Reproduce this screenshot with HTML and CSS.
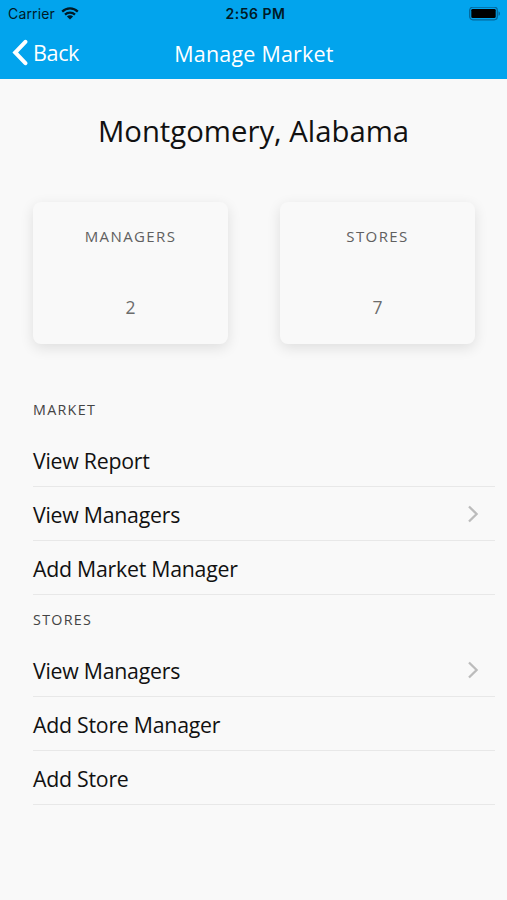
FILE: index.html
```html
<!DOCTYPE html>
<html lang="en">

<head>
    <meta charset="utf-8">
    <meta name="viewport" content="width=device-width, initial-scale=1">
    <title>Manage Market</title>
    <link rel="stylesheet" href="styles.css">
</head>

<body>
    <header class="header">
        <div class="status-bar">
            <div class="carrier">
                <span>Carrier</span>
                <svg class="wifi" width="18" height="13" viewBox="0 0 18 13">
                    <path d="M1.2 4.6a11 11 0 0 1 15.6 0M4 7.6a7.1 7.1 0 0 1 10 0" fill="none" stroke="#001a26" stroke-width="2.2" />
                    <path d="M9 12.6L5.9 9.5a4.4 4.4 0 0 1 6.2 0z" fill="#001a26" />
                </svg>
            </div>
            <div class="time">2:56 PM</div>
            <div class="battery">
                <svg width="32" height="14" viewBox="0 0 32 14">
                    <rect x="0.7" y="0.2" width="27.6" height="12.6" rx="3.2" fill="none" stroke="#04679a" stroke-width="1.3" />
                    <rect x="2.3" y="1.9" width="24.4" height="9.2" rx="1.4" fill="#000" />
                    <path d="M29.5 4.2c2 .8 2 3.8 0 4.6z" fill="#04679a" />
                </svg>
            </div>
        </div>
        <nav class="nav-bar">
            <a class="back">
                <svg width="17" height="27" viewBox="0 0 17 27">
                    <path d="M14.4 2.8L4.2 13.5l10.2 10.7" fill="none" stroke="#fff" stroke-width="4" stroke-linecap="round" stroke-linejoin="miter" />
                </svg>
                <span>Back</span>
            </a>
            <div class="nav-title">Manage Market</div>
        </nav>
    </header>

    <main>
        <h1 class="market-name">Montgomery, Alabama</h1>

        <div class="cards">
            <div class="card">
                <div class="card-label">MANAGERS</div>
                <div class="card-value">2</div>
            </div>
            <div class="card">
                <div class="card-label">STORES</div>
                <div class="card-value">7</div>
            </div>
        </div>

        <section class="list">
            <h2 class="list-header">MARKET</h2>
            <div class="row"><span>View Report</span></div>
            <div class="row">
                <span>View Managers</span>
                <svg class="chevron" width="12" height="18" viewBox="0 0 12 18">
                    <path d="M2 1.5L9.6 9L2 16.5" fill="none" stroke="#bcbcbc" stroke-width="2.3" />
                </svg>
            </div>
            <div class="row"><span>Add Market Manager</span></div>
        </section>

        <section class="list">
            <h2 class="list-header">STORES</h2>
            <div class="row">
                <span>View Managers</span>
                <svg class="chevron" width="12" height="18" viewBox="0 0 12 18">
                    <path d="M2 1.5L9.6 9L2 16.5" fill="none" stroke="#bcbcbc" stroke-width="2.3" />
                </svg>
            </div>
            <div class="row"><span>Add Store Manager</span></div>
            <div class="row"><span>Add Store</span></div>
        </section>
    </main>
</body>

</html>
```
FILE: styles.css
```css
* {
    box-sizing: border-box;
}

body {
    margin: 0;
    min-height: 100vh;
    background: #f9f9f9;
    color: #111;
    font-family: 'Open Sans', sans-serif;
}

.header {
    height: 79px;
    background: #02a4ed;
}

.status-bar {
    display: grid;
    grid-template-columns: 1fr auto 1fr;
    align-items: center;
    height: 27px;
    padding: 0 6px 0 8px;
    color: #001a26;
    font-family: Inter, sans-serif;
    font-size: 14px;
}

.carrier {
    display: flex;
    align-items: center;
    gap: 6px;
    letter-spacing: 0.15px;
}

.time {
    padding-left: 2px;
    font-weight: 600;
    letter-spacing: 0.5px;
}

.battery {
    display: flex;
    justify-content: flex-end;
}

.nav-bar {
    display: grid;
    grid-template-columns: 1fr auto 1fr;
    align-items: center;
    height: 50px;
    padding: 0 11px;
    color: #fff;
}

.back {
    display: flex;
    align-items: center;
    gap: 5px;
    font-size: 21.6px;
    letter-spacing: -0.4px;
}

.nav-title {
    padding: 2px 0 0 1px;
    font-size: 21.5px;
    font-weight: 500;
    letter-spacing: 0.2px;
}

.market-name {
    margin: 0;
    padding-top: 31px;
    font-size: 29.3px;
    font-weight: 400;
    line-height: 42px;
    text-align: center;
}

.cards {
    display: flex;
    justify-content: space-between;
    padding: 50px 32px 0 33px;
}

.card {
    width: 195px;
    height: 142px;
    border-radius: 8px;
    background: #f9f9f9;
    box-shadow: 0 4px 14px rgba(0, 0, 0, 0.11);
    color: #6c6c6c;
    text-align: center;
}

.card-label {
    padding-top: 24px;
    font-size: 15px;
    font-weight: 500;
    line-height: 20px;
    letter-spacing: 1.4px;
    color: #606060;
}

.card-value {
    padding-top: 49px;
    font-size: 17.5px;
    line-height: 24px;
}

.list {
    padding: 0 12px 0 33px;
}

.cards + .list {
    margin-top: 41px;
}

.list-header {
    margin: 0;
    padding-top: 1px;
    font-size: 14.3px;
    font-weight: 400;
    line-height: 47px;
    letter-spacing: 1.3px;
    color: #444;
}

.row {
    display: flex;
    align-items: center;
    justify-content: space-between;
    height: 54px;
    padding-top: 1px;
    padding-right: 16px;
    border-bottom: 1px solid #e8e8e8;
    font-size: 21.3px;
    letter-spacing: -0.25px;
}
```
